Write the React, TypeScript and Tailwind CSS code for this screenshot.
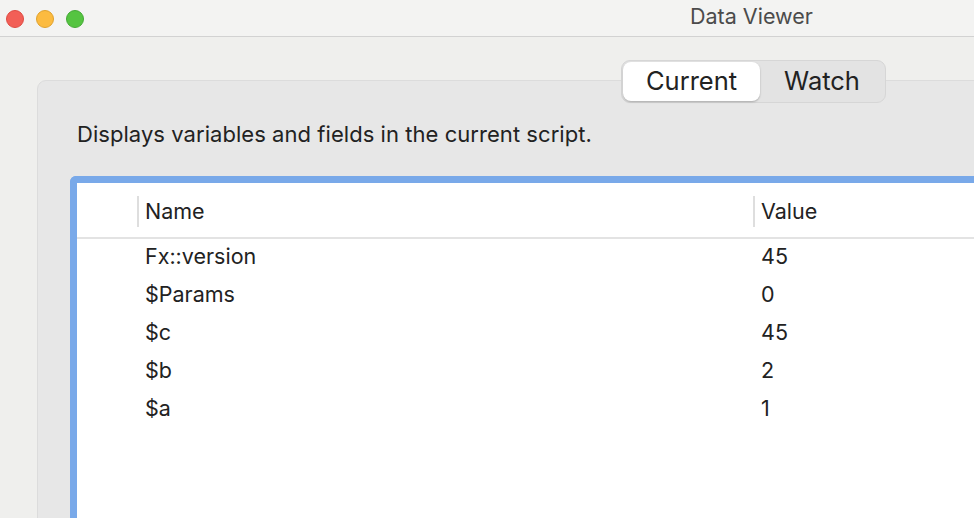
const rows = [
  { name: "Fx::version", value: "45" },
  { name: "$Params", value: "0" },
  { name: "$c", value: "45" },
  { name: "$b", value: "2" },
  { name: "$a", value: "1" },
];

const App = () => {
  return (
    <div
      className="w-[974px] h-[518px] overflow-hidden bg-[#efefed] flex flex-col text-[#222]"
      style={{ fontFamily: "Inter, 'Liberation Sans', sans-serif" }}
    >
      <div className="h-[37px] shrink-0 flex items-center bg-[#f3f3f2] border-b border-[#d2d2d2] relative">
        <div className="flex gap-[12px] pl-[6px] pt-[1px]">
          <div className="w-[18px] h-[18px] rounded-full bg-[#f25f57] border border-[#df4a42]" />
          <div className="w-[18px] h-[18px] rounded-full bg-[#fcbb40] border border-[#e0a12c]" />
          <div className="w-[18px] h-[18px] rounded-full bg-[#55c441] border border-[#43a935]" />
        </div>
        <div className="absolute left-[690px] top-0 text-[21.5px] text-[#4b4b4b]">
          Data Viewer
        </div>
      </div>

      <div className="relative flex-1">
        <div className="ml-[37px] mt-[43px] w-[980px] h-[500px] rounded-tl-[9px] border border-[#dcdcdc] bg-[#e7e7e7] pl-[39px] pt-[41px]">
          <div className="text-[22px] leading-[24px] tracking-[0.05px]">
            Displays variables and fields in the current script.
          </div>
          <div className="mt-[30px] h-[400px] border-[7px] border-r-0 border-b-0 border-[#79a9e9] rounded-tl-[6px] bg-white -ml-[7px]">
            <div className="h-[56px] pt-[3px] flex items-center border-b-2 border-[#e3e3e3]">
              <div className="w-[60px] shrink-0" />
              <div className="w-[616px] shrink-0 flex items-center h-[31px] border-l-2 border-[#dedede] pl-[6px] text-[21.5px]">
                Name
              </div>
              <div className="flex items-center h-[31px] border-l-2 border-[#dedede] pl-[6px] text-[21.5px]">
                Value
              </div>
            </div>
            {rows.map((r) => (
              <div key={r.name} className="h-[38px] pb-[3px] flex items-center text-[21.5px]">
                <div className="w-[68px] shrink-0" />
                <div className="w-[616px] shrink-0">{r.name}</div>
                <div>{r.value}</div>
              </div>
            ))}
          </div>
        </div>

        <div className="absolute left-[621px] top-[23px] w-[265px] h-[43px] rounded-[9px] bg-[#e3e3e3] border border-[#d6d6d6] flex items-center p-[1px]">
          <div className="w-[137px] h-[39px] rounded-[8px] bg-white shadow-[0_1px_2px_rgba(0,0,0,0.25)] flex items-center justify-center text-[25.5px]">
            Current
          </div>
          <div className="flex-1 flex items-center justify-center text-[25.5px]">Watch</div>
        </div>
      </div>
    </div>
  );
};

export default App;
